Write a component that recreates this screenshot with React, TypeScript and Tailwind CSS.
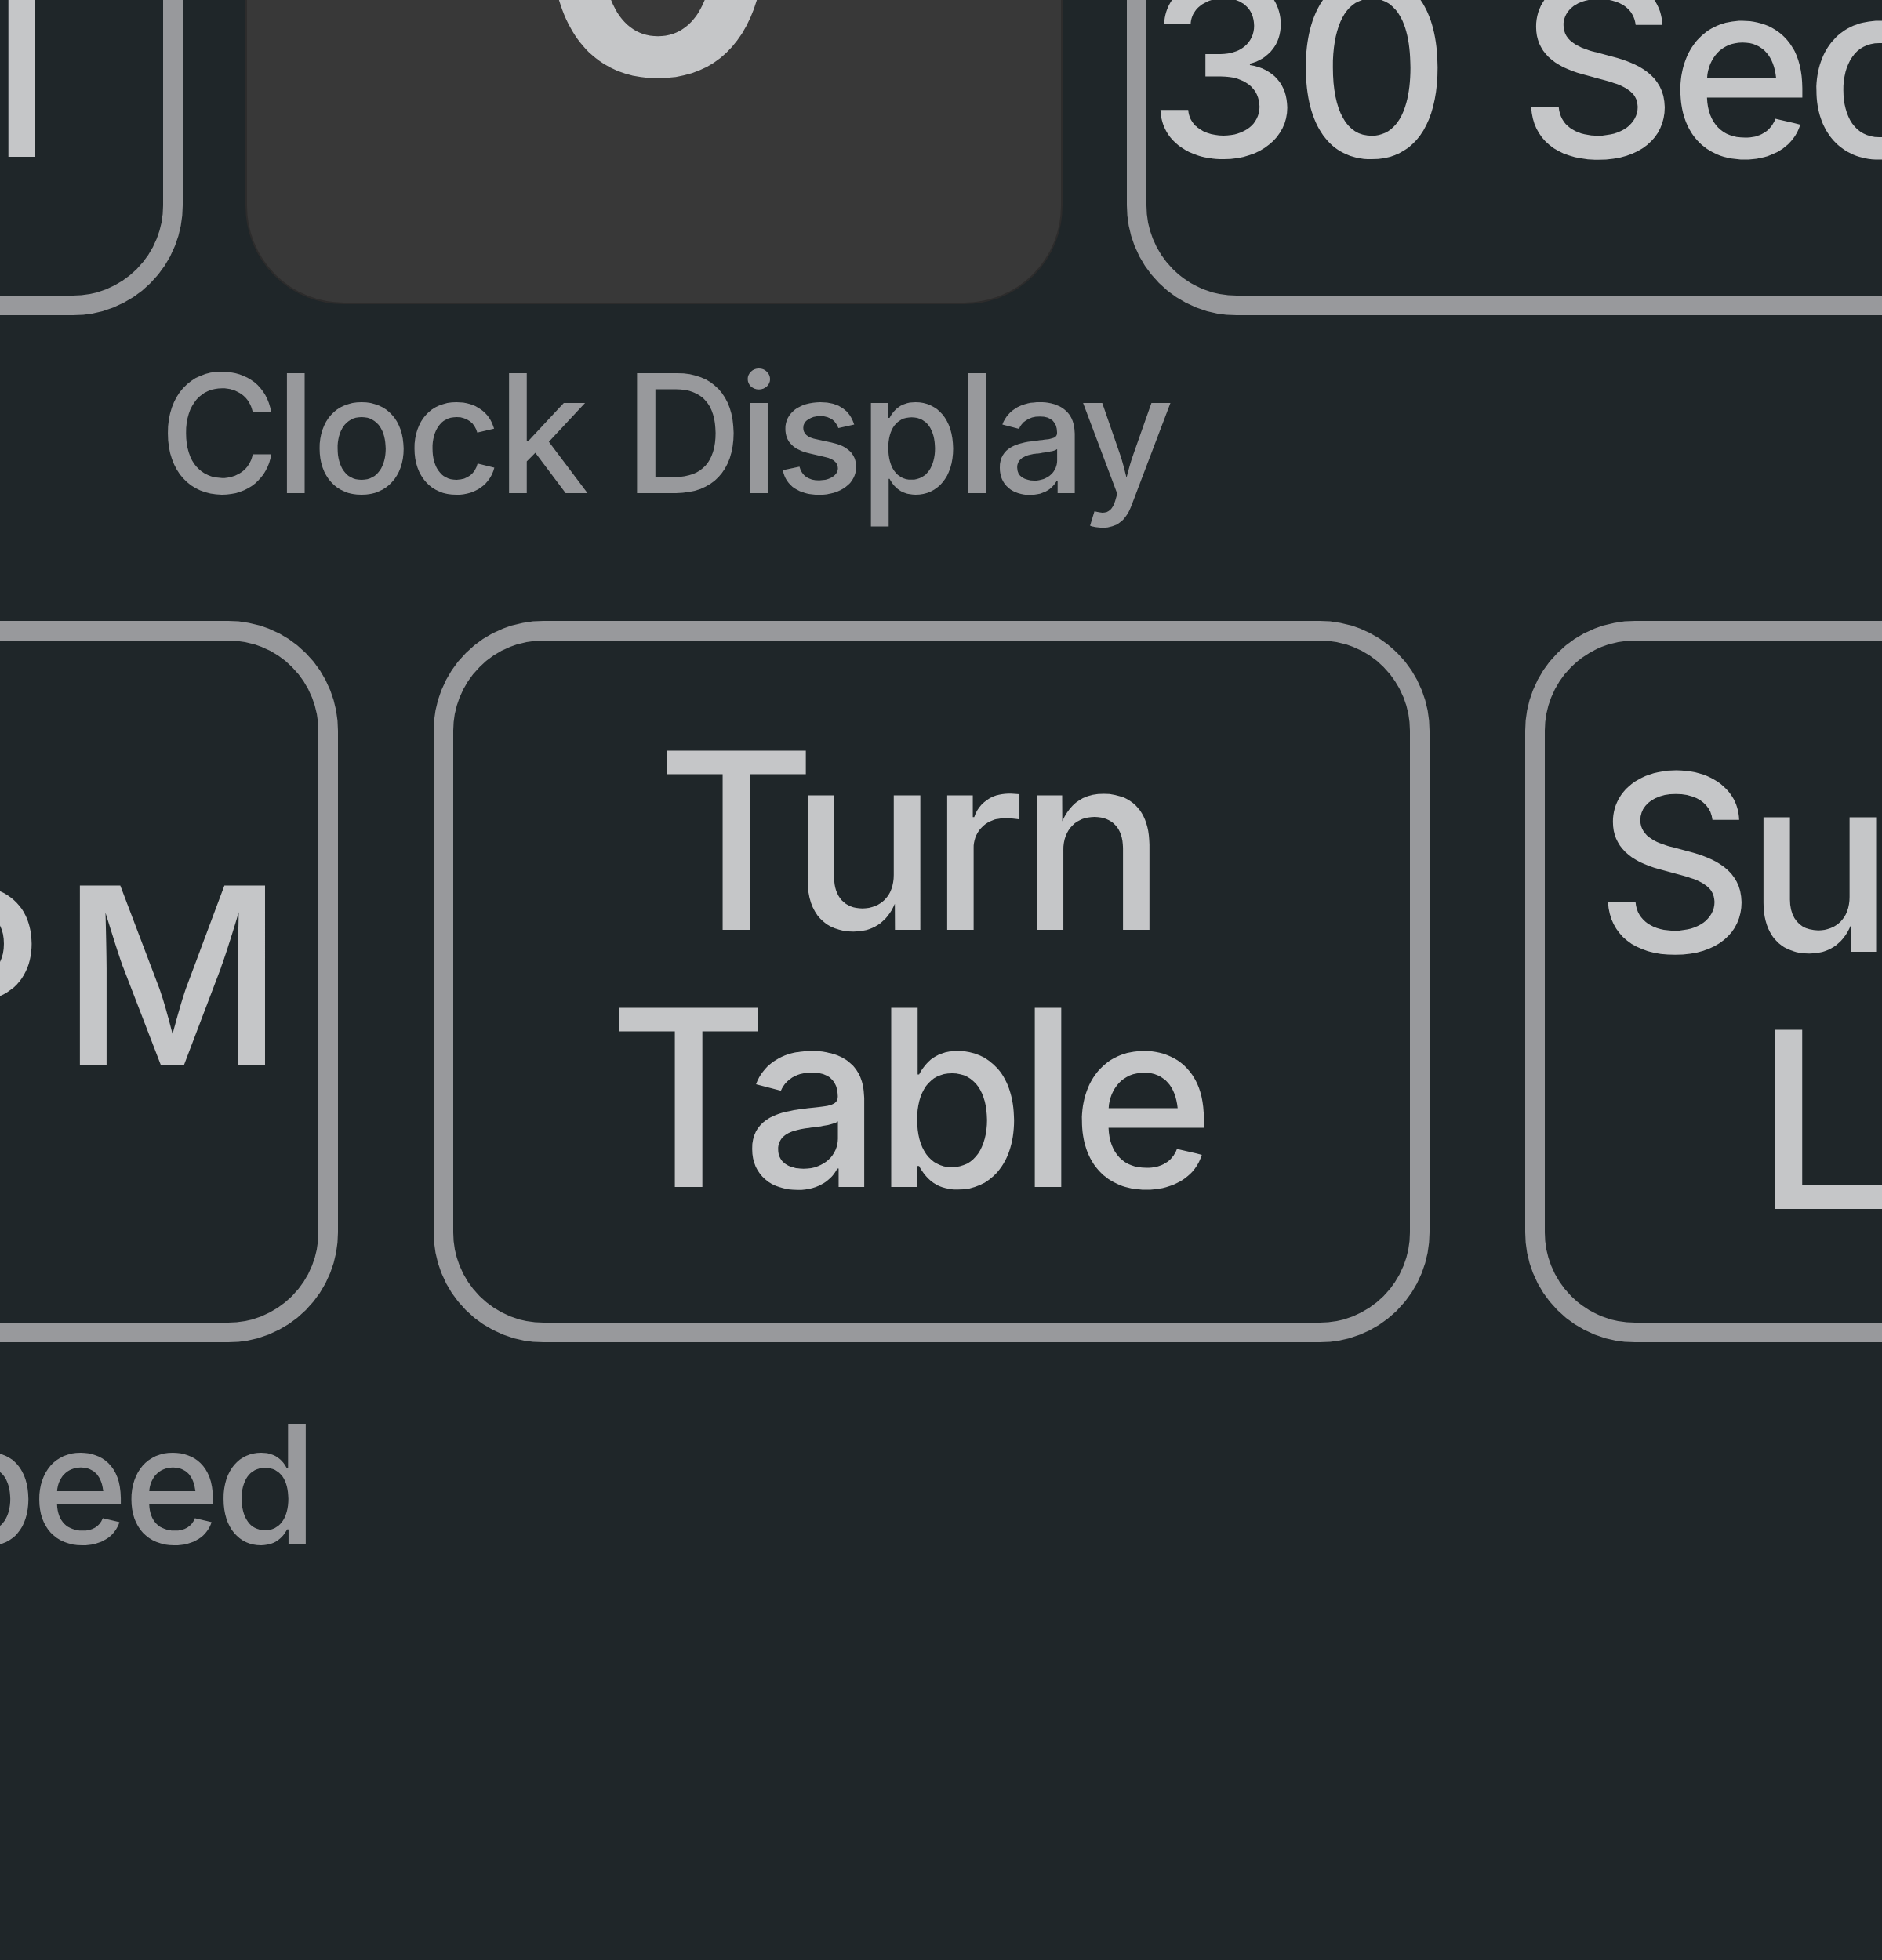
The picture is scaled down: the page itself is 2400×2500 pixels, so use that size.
import React from "react";

type KeyProps = { lines: React.ReactNode[]; className?: string };

function Key({ lines, className }: KeyProps) {
  return (
    <div
      className={
        "shrink-0 w-[1270px] h-[920px] rounded-[140px] border-[25px] border-[#98999c] flex flex-col items-center justify-center text-[#c5c6c8] text-[314px] leading-[328px] font-medium tracking-[-0.035em] " +
        (className ?? "")
      }
    >
      {lines.map((l, i) => (
        <div key={i} className="whitespace-nowrap">
          {l}
        </div>
      ))}
    </div>
  );
}

export default function App() {
  return (
    <div className="w-[2400px] h-[2500px] overflow-hidden bg-[#1f2629] font-['Inter',sans-serif]">
      <div className="ml-[-1037px] mt-[-518px] flex flex-col">
        {/* Row 1 */}
        <div className="flex items-start">
          <Key lines={["Stop", "Cancel"]} className="pb-[40px] pr-[60px]" />
          <div className="ml-[80px] w-[1042px] shrink-0 flex flex-col items-center">
            <div className="mt-[14px] h-[892px] w-full rounded-[125px] bg-[#383838] border-2 border-[#2d2c2c] flex items-center justify-center pb-[50px] pl-[10px]">
              <span className="text-[490px] leading-none font-semibold text-[#c5c6c8]">0</span>
            </div>
            <div className="mt-[38px] pl-[26px] whitespace-nowrap text-[210px] leading-[254px] font-medium tracking-[-0.028em] text-[#98999c]">
              Clock Display
            </div>
          </div>
          <Key
            lines={["Add", "30 Sec"]}
            className="ml-[82px] pb-[40px] pr-[210px] [word-spacing:24px]"
          />
        </div>

        {/* Row 2 */}
        <div className="mt-[112px] ml-[198px] flex items-start gap-[122px]">
          <div className="w-[1270px] shrink-0 flex flex-col items-center">
            <Key
              lines={[
                <>
                  <span>AM/P</span>
                  <span className="ml-[32px]">M</span>
                </>,
              ]}
              className="pb-[16px] pl-[22px]"
            />
            <div className="mt-[54px] pl-[12px] whitespace-nowrap text-[210px] leading-[254px] font-medium tracking-[-0.028em] text-[#98999c]">
              Scroll Speed
            </div>
          </div>
          <Key lines={["Turn", "Table"]} className="pb-[32px] pr-[62px]" />
          <Key lines={["Surface", "Light"]} className="pt-[24px] pl-[8px]" />
        </div>
      </div>
    </div>
  );
}
